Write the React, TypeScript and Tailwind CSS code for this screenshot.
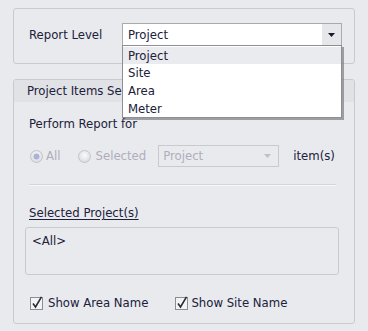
import React from "react";

const font = { fontFamily: "Tahoma, 'DejaVu Sans Condensed', 'Liberation Sans', sans-serif" };

function Arrow({ color = "#1a1a2a" }: { color?: string }) {
  return (
    <svg width="7" height="4" viewBox="0 0 7 4">
      <path d="M0 0 H7 L3.5 4 Z" fill={color} />
    </svg>
  );
}

function Radio({ checked }: { checked?: boolean }) {
  return (
    <svg width="13" height="13" viewBox="0 0 13 13">
      <defs>
        <radialGradient id={checked ? "rg1" : "rg2"} cx="50%" cy="40%" r="60%">
          <stop offset="0%" stopColor="#fbfbfc" />
          <stop offset="100%" stopColor="#d9dade" />
        </radialGradient>
      </defs>
      <circle cx="6.5" cy="6.5" r="6" fill={`url(#${checked ? "rg1" : "rg2"})`} stroke="#c3c4ca" />
      {checked && <circle cx="6.5" cy="6.5" r="3" fill="#a9b3d6" />}
    </svg>
  );
}

function Check() {
  return (
    <svg width="14" height="14" viewBox="0 0 14 14">
      <rect x="0.5" y="1.5" width="12" height="12" fill="#f2f3f5" stroke="#8d8e94" />
      <path d="M3 7.5 L5.5 11 L11.5 0.8" fill="none" stroke="#2a2a3a" strokeWidth="1.6" />
    </svg>
  );
}

export default function App() {
  return (
    <div
      className="relative w-[368px] h-[331px] bg-[#e9eaee] px-[13px] pt-[8px] text-[13px] text-[#20203a]"
      style={font}
    >
      <div className="h-[56px] border border-[#c9cad0] rounded-[3px] flex items-start pt-[14px] pl-[15px]">
        <span className="w-[93px] leading-[23px]">Report Level</span>
        <div className="w-[220px] h-[23px] border border-[#a9aaae] bg-white flex">
          <span className="flex-1 pl-[5px] leading-[21px]">Project</span>
          <div className="w-[19px] bg-[#e6e7ea] flex items-center justify-center">
            <Arrow />
          </div>
        </div>
      </div>

      <div className="mt-[15px] h-[245px] border border-[#c9cad0] rounded-[3px] overflow-hidden">
        <div className="h-[22px] bg-[#e1e2e6] pl-[13px] leading-[22px]">Project Items Se</div>
        <div className="pl-[15px] pr-[15px]">
          <div className="mt-[14px] leading-[16px]">Perform Report for</div>
          <div className="mt-[13px] flex items-center h-[22px] text-[#aeaebd]">
            <span className="ml-[1px] flex items-center gap-[3px]">
              <Radio checked />
              All
            </span>
            <span className="ml-[17px] flex items-center gap-[5px]">
              <Radio />
              Selected
            </span>
            <div className="ml-[12px] w-[121px] h-[22px] border border-[#c9cad0] flex items-center">
              <span className="flex-1 pl-[4px]">Project</span>
              <span className="pr-[7px] flex">
                <Arrow color="#c0c1c6" />
              </span>
            </div>
            <span className="ml-[14px] text-[#20203a]">item(s)</span>
          </div>
          <div className="mt-[17px] h-[2px] border-t border-[#d5d6da] bg-[#f7f7f9] mr-[3px]" />
          <div className="mt-[19px] underline underline-offset-2 leading-[16px]">Selected Project(s)</div>
          <div className="mt-[6px] -ml-[4px] h-[48px] border border-[#c9cad0] rounded-[3px] px-[6px] pt-[5px] leading-[16px]">
            &lt;All&gt;
          </div>
          <div className="mt-[18px] flex items-center">
            <span className="ml-[1px] flex items-center gap-[4px]">
              <Check />
              Show Area Name
            </span>
            <span className="ml-[27px] flex items-center gap-[2px]">
              <Check />
              Show Site Name
            </span>
          </div>
        </div>
      </div>

      <div className="absolute left-[122px] top-[45px] w-[222px] h-[75px]">
        <div className="absolute left-[2px] top-[2px] w-[220px] h-[73px] bg-[#7c7d82] opacity-70" />
        <div className="relative w-[220px] h-[73px] bg-white border border-[#8e8f94] pt-[1px]">
          <div className="h-[17px] bg-[#eaebee] pl-[5px] leading-[17px]">Project</div>
          <div className="h-[18px] pl-[5px] leading-[18px]">Site</div>
          <div className="h-[18px] pl-[5px] leading-[18px]">Area</div>
          <div className="h-[18px] pl-[5px] leading-[18px]">Meter</div>
        </div>
      </div>
    </div>
  );
}
